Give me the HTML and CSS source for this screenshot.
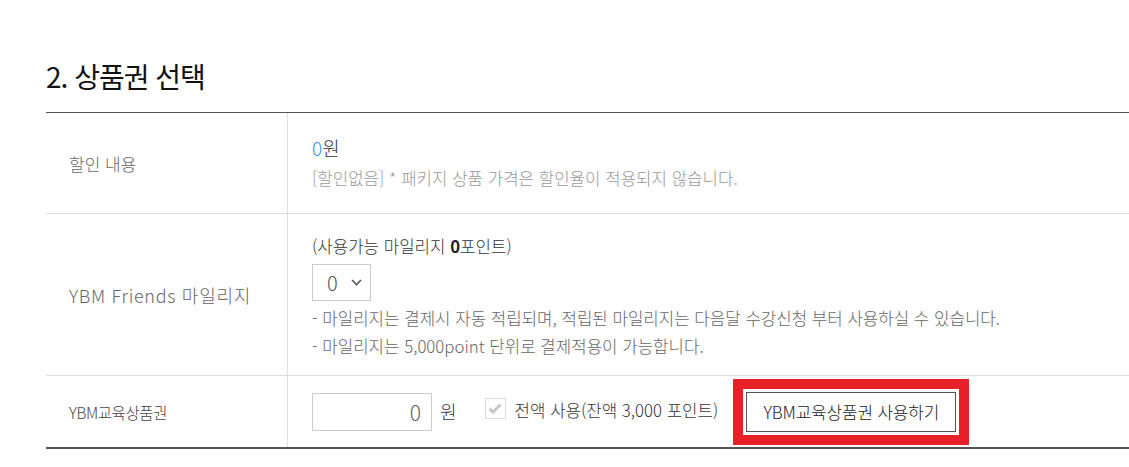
FILE: index.html
```html
<!DOCTYPE html>
<html lang="ko">
<head>
<meta charset="utf-8">
<link rel="stylesheet" href="styles.css">
</head>
<body>
<div class="page">
  <h2 class="title">2. 상품권 선택</h2>
  <div class="table">
    <div class="row row-discount">
      <div class="label">할인 내용</div>
      <div class="value">
        <div class="amount"><span class="blue">0</span>원</div>
        <div class="muted">[할인없음] * 패키지 상품 가격은 할인율이 적용되지 않습니다.</div>
      </div>
    </div>
    <div class="row row-mileage">
      <div class="label label-wide">YBM Friends 마일리지</div>
      <div class="value">
        <div class="avail">(사용가능 마일리지 <b>0</b>포인트)</div>
        <div class="select-box">
          <span class="select-val">0</span>
          <svg class="chev" width="11" height="7" viewBox="0 0 11 7"><path d="M1 1 L5.5 5.5 L10 1" fill="none" stroke="#555" stroke-width="1.6"/></svg>
        </div>
        <div class="note">- 마일리지는 결제시 자동 적립되며, 적립된 마일리지는 다음달 수강신청 부터 사용하실 수 있습니다.</div>
        <div class="note">- 마일리지는 5,000point 단위로 결제적용이 가능합니다.</div>
      </div>
    </div>
    <div class="row row-voucher">
      <div class="label label-sm">YBM교육상품권</div>
      <div class="value inline">
        <input class="amount-input" type="text" value="0">
        <span class="won">원</span>
        <span class="check">
          <svg width="14" height="11" viewBox="0 0 14 11"><path d="M1.5 5.5 L5 9 L12.5 1.5" fill="none" stroke="#c8c8c8" stroke-width="3"/></svg>
        </span>
        <span class="check-label">전액 사용(잔액 3,000 포인트)</span>
        <button class="use-btn" type="button">YBM교육상품권 사용하기</button>
      </div>
    </div>
  </div>
</div>
</body>
</html>
```
FILE: styles.css
```css
* { box-sizing: border-box; }
html, body { margin: 0; padding: 0; background: #fff; }
body {
  font-family: "Noto Sans CJK KR", "Noto Sans", sans-serif;
  font-weight: 300;
  color: #333;
  overflow: hidden;
}
.page { padding: 56px 0 0 46px; width: 1160px; }
.title {
  margin: 0 0 16px 0;
  font-size: 28px;
  line-height: 40px;
  font-weight: 400;
  color: #111;
  letter-spacing: -1px;
}
.table {
  border-top: 1px solid #555;
  border-bottom: 2px solid #555;
}
.row {
  display: flex;
  border-bottom: 1px solid #ddd;
}
.row:last-child { border-bottom: none; }
.label {
  width: 242px;
  flex: none;
  border-right: 1px solid #ddd;
  padding-left: 23px;
  display: flex;
  align-items: center;
  font-size: 17px;
  color: #666;
}
.label-wide { font-size: 18px; letter-spacing: 0.7px; }
.label-sm { font-size: 15.5px; color: #444; letter-spacing: -0.4px; }
.value {
  flex: 1;
  padding-left: 24px;
  font-size: 16.8px;
}
.row-discount { height: 101px; }
.row-discount .value { display: flex; flex-direction: column; justify-content: center; padding-bottom: 1px; }
.amount { font-size: 19px; line-height: 30px; color: #333; }
.blue { color: #3d8fe0; }
.muted { color: #999; line-height: 30px; }
.row-mileage { height: 162px; }
.row-mileage .value { padding-top: 20px; }
.avail { line-height: 24px; color: #333; }
.avail b { font-weight: 700; color: #222; }
.select-box {
  margin-top: 6px;
  width: 59px;
  height: 37px;
  border: 1px solid #ccc;
  display: flex;
  align-items: center;
  padding-left: 14px;
  gap: 13px;
  margin-bottom: 3px;
}
.select-val { font-size: 20px; color: #555; }
.note { line-height: 28px; color: #666; }
.row-voucher { height: 71px; }
.inline { display: flex; align-items: center; }
.amount-input {
  width: 120px;
  height: 38px;
  border: 1px solid #ccc;
  font-family: inherit;
  font-weight: 300;
  font-size: 21px;
  color: #666;
  text-align: right;
  padding: 0 10px 0 0;
  margin: 0;
  outline: none;
}
.won { margin-left: 8px; font-size: 18px; color: #333; margin-top: -2px; }
.check {
  margin-left: 28px;
  width: 21px;
  height: 21px;
  border: 1px solid #ddd;
  display: flex;
  align-items: center;
  justify-content: center;
  margin-top: -6px;
}
.check-label { margin-left: 9px; font-size: 16.8px; color: #333; margin-top: -3px; }
.use-btn {
  margin-left: 28px;
  width: 210px;
  height: 40px;
  background: #fff;
  border: 1px solid #555;
  font-family: inherit;
  font-weight: 300;
  font-size: 17px;
  color: #222;
  letter-spacing: -0.2px;
  outline: 10px solid #e8202a;
  outline-offset: 3px;
  cursor: pointer;
}
```
